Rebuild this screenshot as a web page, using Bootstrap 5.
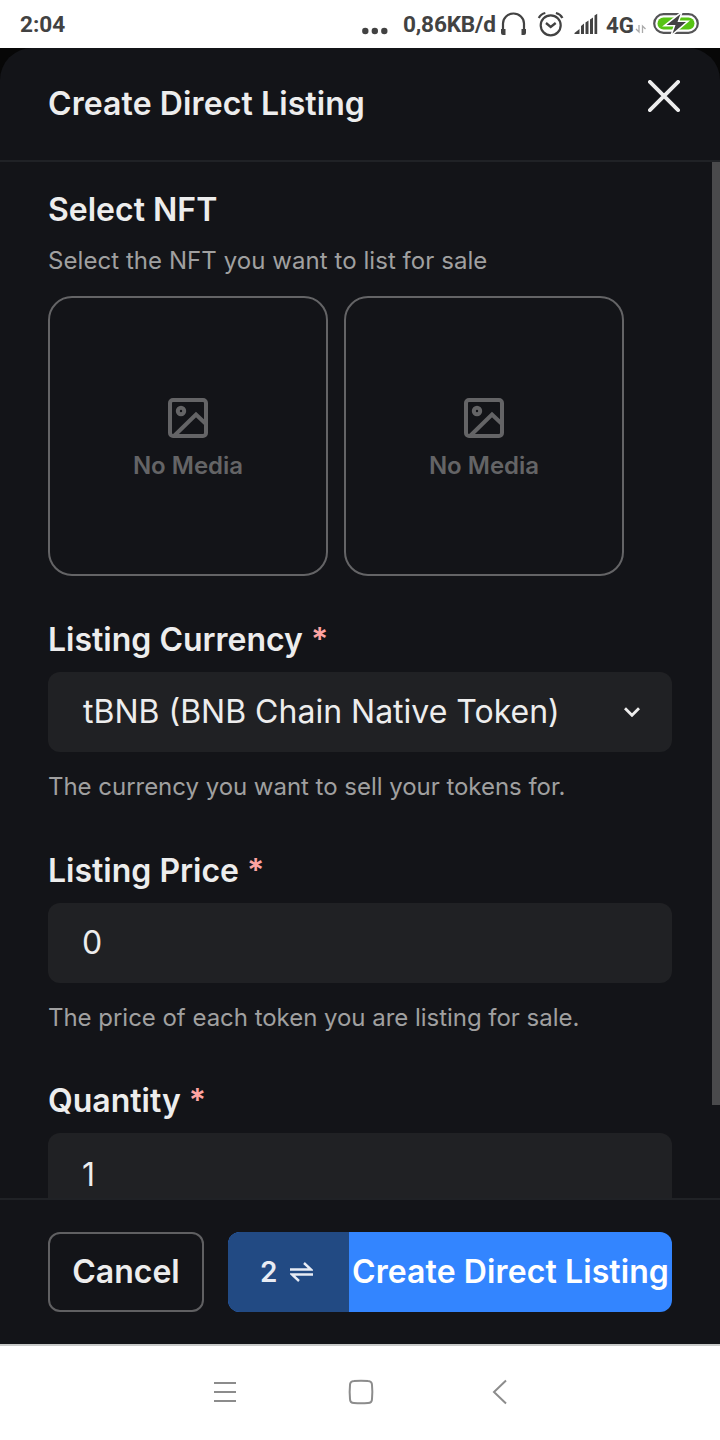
<!DOCTYPE html>
<html lang="en">
<head>
<meta charset="utf-8">
<meta name="viewport" content="width=device-width, initial-scale=1">
<title>Create Direct Listing</title>
<link href="https://cdn.jsdelivr.net/npm/bootstrap@5.3.0/dist/css/bootstrap.min.css" rel="stylesheet">
<style>
  body { font-family: Inter, sans-serif; background: #070707; color: #ededed; font-size: 32px; line-height: 48px; }
  .screen { height: 1440px; overflow: hidden; }
  .statusbar { height: 48px; color: #424242; font: 700 22.6px/48px Roboto, sans-serif; padding: 1px 21px 0 20px; }
  .statusbar svg { flex: none; margin-top: 1px; }
  .rate { margin-left: 15px; width: 93px; letter-spacing: -.2px; }
  .drawer { background: #131418; border-radius: 32px 32px 0 0; min-height: 0; }
  .drawer-head { height: 114px; padding: 0 40px 0 48px; border-bottom: 2px solid #202226; }
  .title { font-size: 32px; font-weight: 600; line-height: 48px; margin: 0; color: #ededed; white-space: nowrap; }
  .spaced { letter-spacing: .1px; }
  .close-btn { margin-top: -16px; }
  .drawer-body { height: 1036px; overflow: hidden; }
  .form-col { width: 712px; padding: 24px 40px 0 48px; }
  .thumb { width: 8px; height: 943px; background: #4a4a4c; }
  .hint { font-size: 24px; line-height: 36px; color: #a0a0a0; white-space: nowrap; letter-spacing: -.03px; }
  .media { width: 280px; height: 280px; border: 2px solid #646466; border-radius: 24px; color: #646466; font-size: 24px; font-weight: 600; line-height: 36px; padding-top: 10px; }
  .star { color: #fea3a2; font-weight: 600; margin-left: 0; }
  .field { height: 80px; background: #202124; border-radius: 12px; padding: 0 32px 0 34px; margin-top: 8px; white-space: nowrap; }
  .drawer-foot { height: 146px; border-top: 2px solid #202226; padding: 32px 48px; }
  .foot-btn { height: 80px; border-radius: 12px; font-size: 32px; font-weight: 600; line-height: 48px; padding: 0; white-space: nowrap; color: #ededed; }
  .cancel { width: 156px; border: 2px solid #606062; }
  .submit { width: 444px; background: #3385ff; color: #fff; overflow: hidden; }
  .count { width: 121px; background: #224a83; font-size: 28px; color: #e8ecf4; padding-left: 32px; }
  .navbtns { height: 96px; background: #fff; border-top: 2px solid #c8cac9; }
</style>
</head>
<body>
<div class="screen d-flex flex-column">
  <header class="statusbar bg-white d-flex justify-content-between">
    <span>2:04</span>
    <div class="d-flex">
      <svg width="26" height="46" viewBox="0 0 26 46" fill="#424242"><circle cx="3.3" cy="29" r="3.2"/><circle cx="12.8" cy="29" r="3.2"/><circle cx="22.3" cy="29" r="3.2"/></svg>
      <span class="rate text-nowrap">0,86KB/d</span>
      <svg width="203" height="46" viewBox="496 2 203 46" fill="none" stroke="#424242">
        <path d="M503 31V23.500a10.500 10 0 0 1 21 0V31" stroke-width="2.200"/>
        <path d="M501 29h4.500v6H503q-2 0-2-2zM526 29h-4.500v6h2.500q2 0 2-2z" fill="#424242" stroke="none"/>
        <circle cx="550.7" cy="25.300" r="10" stroke-width="2.200"/><path d="M546 23l4.700 4 5-4M538.800 18q2-4 6.500-5M562.400 18q-2-4-6.500-5" stroke-width="2.300"/>
        <path d="M574.500 34v-1l5-4v5zM581 34v-8l3-2.500V34zM585.500 34V22.500l3-2V34zM590 34V19.500l3-2V34zM594.500 34V15.500l2.700-1.800V34z" fill="#424242" stroke="none"/>
        <text x="606" y="33" font-family="Roboto" font-size="22.600" font-weight="700" fill="#424242" stroke="none" textLength="28" lengthAdjust="spacingAndGlyphs">4G</text>
        <path d="M639 25v7l-3-3M642.500 33v-7l3 3" stroke="#aaa" stroke-width="1.300"/>
        <rect x="654.200" y="14.200" width="43.600" height="18.600" rx="9.300" stroke="#555557" stroke-width="2.200"/>
        <rect x="657.500" y="17.500" width="37" height="12" rx="6" fill="#57c413" stroke="none"/>
        <path d="M680.500 14L666.500 25h9L672.500 33.500 686 22h-8.500z" fill="#424242" stroke="#fff" stroke-width="3" paint-order="stroke"/>
      </svg>
    </div>
  </header>

  <main class="drawer d-flex flex-column">
    <div class="drawer-head d-flex align-items-center justify-content-between">
      <h1 class="title spaced">Create Direct Listing</h1>
      <svg class="close-btn" width="32" height="32" viewBox="0 0 32 32" stroke="#ededed" stroke-width="3.800" stroke-linecap="round"><path d="M1.900 1.900l28.200 28.200M30.100 1.900L1.900 30.100"/></svg>
    </div>

    <div class="drawer-body d-flex">
      <form class="form-col">
        <h2 class="title">Select NFT</h2>
        <div class="hint" style="margin:9px 0 17px;letter-spacing:.06px">Select the NFT you want to list for sale</div>
        <div class="d-flex gap-3">
          <div class="media d-flex flex-column align-items-center justify-content-center">
            <svg width="40" height="40" viewBox="0 0 40 40" fill="none" stroke="currentColor" stroke-width="4"><rect x="2" y="2" width="36" height="36" rx="3"/><circle cx="13" cy="13" r="3.200"/><path d="M6 38L28 16.500 38 26"/></svg>
            <span style="margin-top:10px">No Media</span>
          </div>
          <div class="media d-flex flex-column align-items-center justify-content-center">
            <svg width="40" height="40" viewBox="0 0 40 40" fill="none" stroke="currentColor" stroke-width="4"><rect x="2" y="2" width="36" height="36" rx="3"/><circle cx="13" cy="13" r="3.200"/><path d="M6 38L28 16.500 38 26"/></svg>
            <span style="margin-top:10px">No Media</span>
          </div>
        </div>

        <div class="title" style="margin-top:40px">Listing Currency <span class="star">*</span></div>
        <div class="field d-flex align-items-center justify-content-between">
          <span class="ps-0" style="margin-left:1px">tBNB (BNB Chain Native Token)</span>
          <svg width="16" height="10" viewBox="0 0 16 10" fill="none" stroke="#ededed" stroke-width="2.800"><path d="M1 1.300l7 7 7-7"/></svg>
        </div>
        <div class="hint" style="margin-top:17px">The currency you want to sell your tokens for.</div>

        <div class="title" style="margin-top:42px">Listing Price <span class="star">*</span></div>
        <div class="field d-flex align-items-center">0</div>
        <div class="hint" style="margin-top:17px">The price of each token you are listing for sale.</div>

        <div class="title" style="margin-top:41px">Quantity <span class="star">*</span></div>
        <div class="field d-flex align-items-center pt-1">1</div>
      </form>
      <div class="thumb"></div>
    </div>

    <div class="drawer-foot d-flex justify-content-between">
      <button type="button" class="btn foot-btn cancel">Cancel</button>
      <button type="button" class="btn foot-btn submit border-0 d-flex">
        <span class="count h-100 d-flex align-items-center">2
          <svg style="margin-left:13px" width="23" height="20" viewBox="0 0 23 20" fill="none" stroke="currentColor" stroke-width="2.400"><path d="M0 7.500h21L14 1M23 12.500H2L9 19"/></svg>
        </span>
        <span class="spaced flex-grow-1 align-self-center text-center">Create Direct Listing</span>
      </button>
    </div>
  </main>

  <nav class="navbtns d-flex">
    <svg width="720" height="94" viewBox="0 1346 720 94" fill="none" stroke="#8c8c8c" stroke-width="2">
      <path d="M214 1383h22M214 1392h22M214 1401h22"/>
      <path d="M354 1381q7-.7 14 0 4 .3 4 4 .7 7 0 14 0 4-4 4-7 .7-14 0-4 0-4-4-.7-7 0-14 0-3.700 4-4z"/>
      <path d="M506 1380.500L494 1392l12 11.500"/>
    </svg>
  </nav>
</div>
<script src="https://cdn.jsdelivr.net/npm/bootstrap@5.3.0/dist/js/bootstrap.bundle.min.js"></script>
</body>
</html>
